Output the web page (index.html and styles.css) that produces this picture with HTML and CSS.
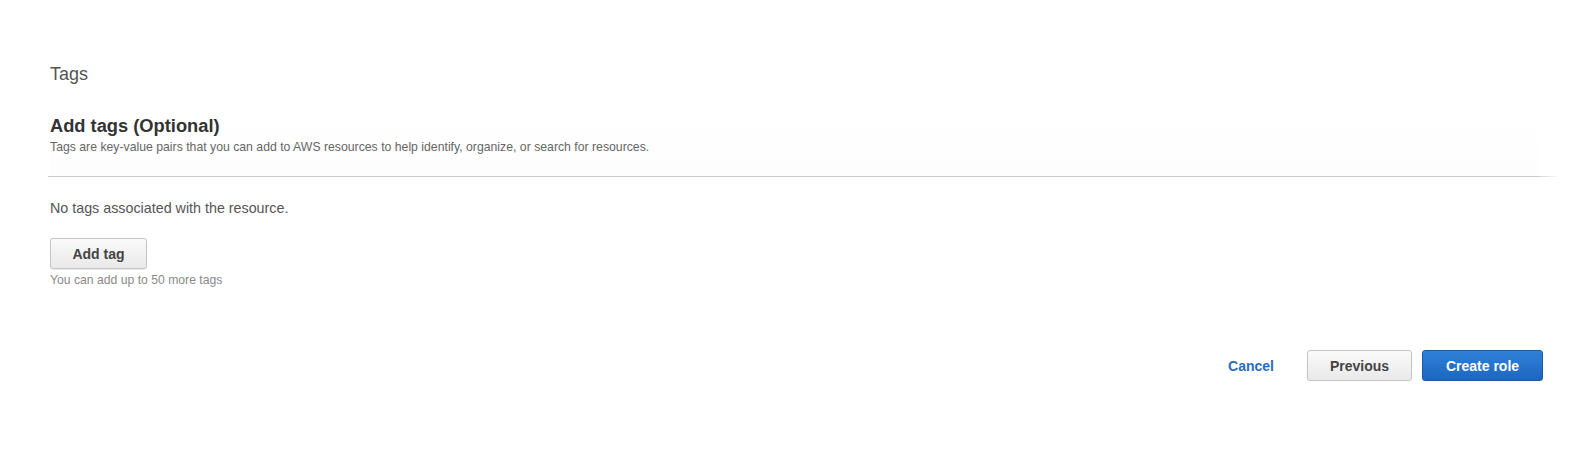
FILE: index.html
```html
<!DOCTYPE html>
<html lang="en">
<head>
<meta charset="utf-8">
<title>Tags</title>
<link rel="stylesheet" href="styles.css">
</head>
<body>
<div class="page">
  <h1 class="step-title">Tags</h1>
  <div class="section-header">
    <h2 class="section-title">Add tags (Optional)</h2>
    <p class="section-desc">Tags are key-value pairs that you can add to AWS resources to help identify, organize, or search for resources.</p>
  </div>
  <div class="rule"></div>
  <p class="empty">No tags associated with the resource.</p>
  <button class="btn btn-default add-tag" type="button">Add tag</button>
  <p class="hint">You can add up to 50 more tags</p>
  <div class="footer">
    <a class="cancel" href="#">Cancel</a>
    <button class="btn btn-default prev" type="button">Previous</button>
    <button class="btn btn-primary create" type="button">Create role</button>
  </div>
</div>
</body>
</html>
```
FILE: styles.css
```css
html, body {
  margin: 0;
  padding: 0;
  background: #ffffff;
}
body {
  font-family: "Liberation Sans", Arial, sans-serif;
  color: #444;
}
.page {
  padding: 0 47px 0 50px;
}
.step-title {
  margin: 63px 0 0;
  font-size: 18px;
  line-height: 22px;
  font-weight: normal;
  color: #545454;
}
.section-header {
  margin-top: 30px;
  padding-bottom: 21px;
  background: linear-gradient(to bottom, #ffffff 0, #fdfdfd 100%);
  margin-right: 5px;
}
.section-title {
  margin: 0;
  font-size: 18.3px;
  line-height: 22px;
  font-weight: bold;
  color: #333;
}
.section-desc {
  margin: 3px 0 0;
  font-size: 12.25px;
  line-height: 15px;
  color: #666;
}
.rule {
  height: 1px;
  margin-left: -2px;
  margin-right: -17px;
  background: linear-gradient(to right, #cdc8c9 0, #cdc8c9 calc(100% - 24px), rgba(205,200,201,0) 100%);
}
.empty {
  margin: 22px 0 0;
  font-size: 14.3px;
  line-height: 18px;
  color: #555;
}
.btn {
  font-family: "Liberation Sans", Arial, sans-serif;
  font-weight: bold;
  font-size: 14px;
  height: 31px;
  border-radius: 3px;
  padding: 0;
  cursor: pointer;
}
.btn-default {
  background: linear-gradient(to bottom, #fafafa 0, #e9e9e9 100%);
  border: 1px solid #c4c4c4;
  color: #444;
  box-shadow: 0 1px 1px rgba(0,0,0,0.08);
}
.btn-primary {
  background: linear-gradient(to bottom, #2f80d9 0, #1d66bf 100%);
  border: 1px solid #1a59a6;
  color: #ffffff;
  box-shadow: 0 1px 1px rgba(0,0,0,0.12);
}
.add-tag {
  display: block;
  margin-top: 21px;
  width: 97px;
}
.hint {
  margin: 4px 0 0;
  font-size: 12.2px;
  line-height: 15px;
  color: #8a8a8a;
}
.footer {
  margin-top: 62px;
  display: flex;
  justify-content: flex-end;
  align-items: center;
}
.cancel {
  font-size: 14px;
  font-weight: bold;
  color: #2a6bc2;
  text-decoration: none;
  margin-right: 33px;
}
.prev {
  width: 105px;
  margin-right: 10px;
}
.create {
  width: 121px;
}
```
